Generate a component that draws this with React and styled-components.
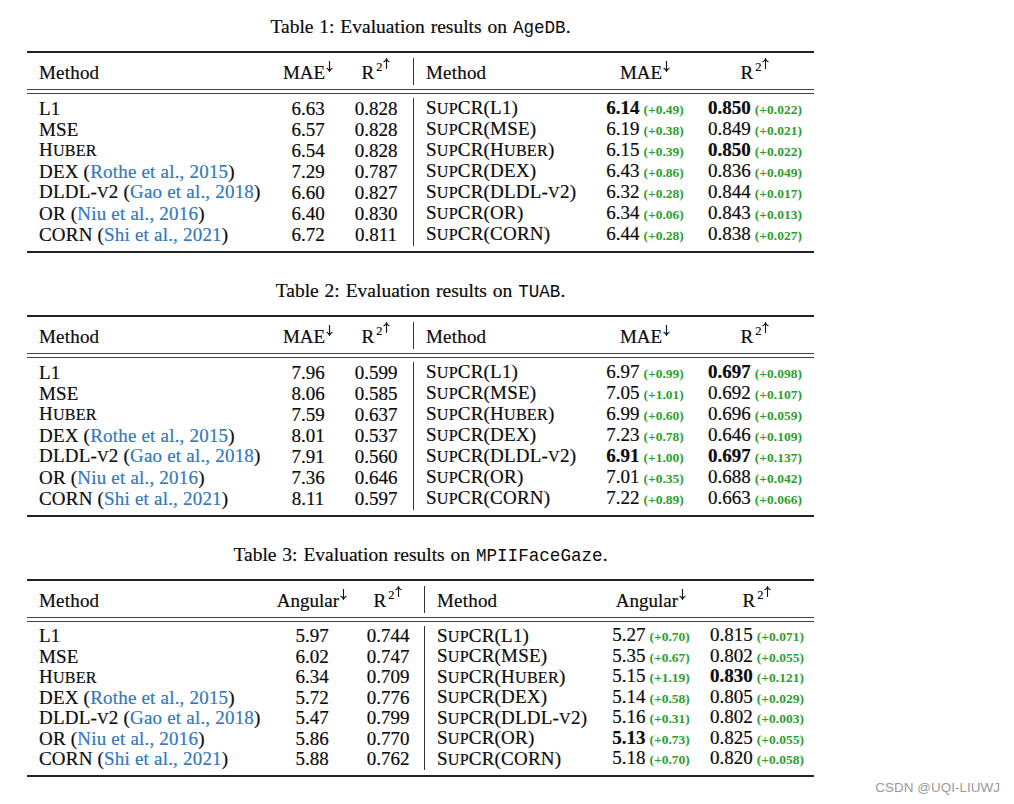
import React from "react";
import styled, { createGlobalStyle } from "styled-components";

const GlobalStyle = createGlobalStyle`
  html, body {
    margin: 0;
    padding: 0;
    background: #ffffff;
  }
  body {
    font-family: "Liberation Serif", "Times New Roman", serif;
    color: #0c0c0c;
  }
`;

const Page = styled.div`
  width: 1014px;
  height: 804px;
  box-sizing: border-box;
  padding: 16px 0 0 27px;
  display: flex;
  flex-direction: column;
`;

const Block = styled.section`
  width: 787px;
  display: flex;
  flex-direction: column;
  margin-bottom: 27.5px;
  &:last-of-type {
    margin-bottom: 0;
  }
`;

const Caption = styled.div`
  height: 21px;
  font-size: 19.5px;
  line-height: 21px;
  text-align: center;
  word-spacing: 1px;
  margin-bottom: 13.5px;
  -webkit-text-stroke: 0.2px #0c0c0c;
`;

const Mono = styled.span`
  font-family: "Liberation Mono", "Courier New", monospace;
  font-size: 17.6px;
  line-height: 1;
  -webkit-text-stroke: 0;
`;

const TopRule = styled.div`
  height: 2px;
  background: #222;
`;

const DoubleRule = styled.div`
  height: 5px;
  box-sizing: border-box;
  border-top: 1px solid #444;
  border-bottom: 1px solid #444;
`;

const Grid = styled.div`
  display: grid;
  grid-template-columns: ${(p) => p.$cols};
  font-size: 19px;
  -webkit-text-stroke: 0.2px #0c0c0c;
`;

const HeadGrid = styled(Grid)`
  height: 36px;
  box-sizing: border-box;
  padding-top: 3px;
  align-items: center;
`;

const BodyGrid = styled(Grid)`
  grid-template-rows: repeat(7, ${(p) => p.$rowH}px);
  align-items: center;
  padding: 4px 0 6px;
`;

const Cell = styled.div`
  white-space: nowrap;
  text-align: ${(p) => (p.$left ? "left" : "center")};
  padding-left: ${(p) => (p.$left ? "12px" : "0")};
  letter-spacing: ${(p) => (p.$left ? "0.2px" : "0")};
  line-height: 21px;
`;

const HeadSep = styled.div`
  align-self: stretch;
  background: #333;
  margin: 2px 0 4px;
`;

const BodySep = styled.div`
  grid-column: 4;
  grid-row: 1 / span 7;
  align-self: stretch;
  background: #333;
  margin: 0 0 -1px;
`;

const Sup = styled.span`
  display: inline-block;
  font-size: 12.5px;
  line-height: 1;
  vertical-align: top;
  margin: -1px 0 0 2px;
`;

const ArrowBox = styled.span`
  display: inline-block;
  vertical-align: top;
  margin: ${(p) => (p.$up ? "-4px 0 0 1px" : "-1px 0 0 1px")};
  svg {
    display: block;
  }
`;

const ScLow = styled.span`
  font-size: 0.85em;
`;

const Cite = styled.span`
  color: #3378bd;
  -webkit-text-stroke: 0.2px #3378bd;
`;

const Delta = styled.span`
  color: #2ca02c;
  font-size: 13.5px;
  font-weight: 700;
  margin-left: 4px;
  -webkit-text-stroke: 0;
`;

const Num = styled.span`
  font-weight: ${(p) => (p.$bold ? 700 : 400)};
`;

const BottomRule = styled.div`
  height: 2px;
  background: #222;
`;

const Watermark = styled.div`
  align-self: flex-end;
  margin-right: 14px;
  margin-top: 3px;
  font-family: "Liberation Sans", Arial, sans-serif;
  font-size: 13.5px;
  color: #9a9a9a;
  line-height: 16px;
`;

// small caps drawn like LaTeX \textsc: lowercase becomes smaller capitals
function Sc({ children }) {
  const parts = children.match(/[a-z]+|[^a-z]+/g);
  return (
    <>
      {parts.map((s, i) =>
        /[a-z]/.test(s) ? <ScLow key={i}>{s.toUpperCase()}</ScLow> : s
      )}
    </>
  );
}

function Arrow({ up }) {
  return (
    <ArrowBox $up={up}>
      <svg width="7" height="11" viewBox="0 0 7 11">
        <g
          transform={up ? "rotate(180 3.5 5.5)" : undefined}
          fill="none"
          stroke="#111"
          strokeWidth="1.1"
          strokeLinecap="round"
        >
          <path d="M3.5 0.5 V10.2" />
          <path d="M0.9 7.2 Q3 8.2 3.5 10.4 Q4 8.2 6.1 7.2" />
        </g>
      </svg>
    </ArrowBox>
  );
}

const leftNames = [
  <>L1</>,
  <>MSE</>,
  <Sc>Huber</Sc>,
  <>
    DEX (<Cite>Rothe et al., 2015</Cite>)
  </>,
  <>
    <Sc>DLDL-v2</Sc> (<Cite>Gao et al., 2018</Cite>)
  </>,
  <>
    OR (<Cite>Niu et al., 2016</Cite>)
  </>,
  <>
    CORN (<Cite>Shi et al., 2021</Cite>)
  </>,
];

const rightNames = [
  <>
    <Sc>SupCR</Sc>(L1)
  </>,
  <>
    <Sc>SupCR</Sc>(MSE)
  </>,
  <>
    <Sc>SupCR</Sc>(<Sc>Huber</Sc>)
  </>,
  <>
    <Sc>SupCR</Sc>(DEX)
  </>,
  <>
    <Sc>SupCR</Sc>(<Sc>DLDL-v2</Sc>)
  </>,
  <>
    <Sc>SupCR</Sc>(OR)
  </>,
  <>
    <Sc>SupCR</Sc>(CORN)
  </>,
];

const tables = [
  {
    title: "Table 1: Evaluation results on ",
    ds: "AgeDB",
    metric: "MAE",
    cols: "250px 62px 74px 1px 173px 116px 104px",
    rowH: 21,
    rows: [
      ["6.63", "0.828", "6.14", "+0.49", "0.850", "+0.022", true, true],
      ["6.57", "0.828", "6.19", "+0.38", "0.849", "+0.021", false, false],
      ["6.54", "0.828", "6.15", "+0.39", "0.850", "+0.022", false, true],
      ["7.29", "0.787", "6.43", "+0.86", "0.836", "+0.049", false, false],
      ["6.60", "0.827", "6.32", "+0.28", "0.844", "+0.017", false, false],
      ["6.40", "0.830", "6.34", "+0.06", "0.843", "+0.013", false, false],
      ["6.72", "0.811", "6.44", "+0.28", "0.838", "+0.027", false, false],
    ],
  },
  {
    title: "Table 2: Evaluation results on ",
    ds: "TUAB",
    metric: "MAE",
    cols: "250px 62px 74px 1px 173px 116px 104px",
    rowH: 21,
    rows: [
      ["7.96", "0.599", "6.97", "+0.99", "0.697", "+0.098", false, true],
      ["8.06", "0.585", "7.05", "+1.01", "0.692", "+0.107", false, false],
      ["7.59", "0.637", "6.99", "+0.60", "0.696", "+0.059", false, false],
      ["8.01", "0.537", "7.23", "+0.78", "0.646", "+0.109", false, false],
      ["7.91", "0.560", "6.91", "+1.00", "0.697", "+0.137", true, true],
      ["7.36", "0.646", "7.01", "+0.35", "0.688", "+0.042", false, false],
      ["8.11", "0.597", "7.22", "+0.89", "0.663", "+0.066", false, false],
    ],
  },
  {
    title: "Table 3: Evaluation results on ",
    ds: "MPIIFaceGaze",
    metric: "Angular",
    cols: "245px 80px 72px 1px 172px 108px 104px",
    rowH: 20.5,
    rows: [
      ["5.97", "0.744", "5.27", "+0.70", "0.815", "+0.071", false, false],
      ["6.02", "0.747", "5.35", "+0.67", "0.802", "+0.055", false, false],
      ["6.34", "0.709", "5.15", "+1.19", "0.830", "+0.121", false, true],
      ["5.72", "0.776", "5.14", "+0.58", "0.805", "+0.029", false, false],
      ["5.47", "0.799", "5.16", "+0.31", "0.802", "+0.003", false, false],
      ["5.86", "0.770", "5.13", "+0.73", "0.825", "+0.055", true, false],
      ["5.88", "0.762", "5.18", "+0.70", "0.820", "+0.058", false, false],
    ],
  },
];

function MetricHead({ metric }) {
  return (
    <Cell>
      {metric}
      <Arrow />
    </Cell>
  );
}

function R2Head() {
  return (
    <Cell>
      R<Sup>2</Sup>
      <Arrow up />
    </Cell>
  );
}

function ResultTable({ t }) {
  return (
    <Block>
      <Caption>
        {t.title}
        <Mono>{t.ds}</Mono>.
      </Caption>
      <TopRule />
      <HeadGrid $cols={t.cols}>
        <Cell $left>Method</Cell>
        <MetricHead metric={t.metric} />
        <R2Head />
        <HeadSep />
        <Cell $left>Method</Cell>
        <MetricHead metric={t.metric} />
        <R2Head />
      </HeadGrid>
      <DoubleRule />
      <BodyGrid $cols={t.cols} $rowH={t.rowH}>
        <BodySep />
        {t.rows.map((r, i) => (
          <React.Fragment key={i}>
            <Cell $left>{leftNames[i]}</Cell>
            <Cell>{r[0]}</Cell>
            <Cell>{r[1]}</Cell>
            <Cell $left>{rightNames[i]}</Cell>
            <Cell>
              <Num $bold={r[6]}>{r[2]}</Num>
              <Delta>({r[3]})</Delta>
            </Cell>
            <Cell>
              <Num $bold={r[7]}>{r[4]}</Num>
              <Delta>({r[5]})</Delta>
            </Cell>
          </React.Fragment>
        ))}
      </BodyGrid>
      <BottomRule />
    </Block>
  );
}

export default function App() {
  return (
    <>
      <GlobalStyle />
      <Page>
        {tables.map((t) => (
          <ResultTable key={t.ds} t={t} />
        ))}
        <Watermark>CSDN @UQI-LIUWJ</Watermark>
      </Page>
    </>
  );
}
